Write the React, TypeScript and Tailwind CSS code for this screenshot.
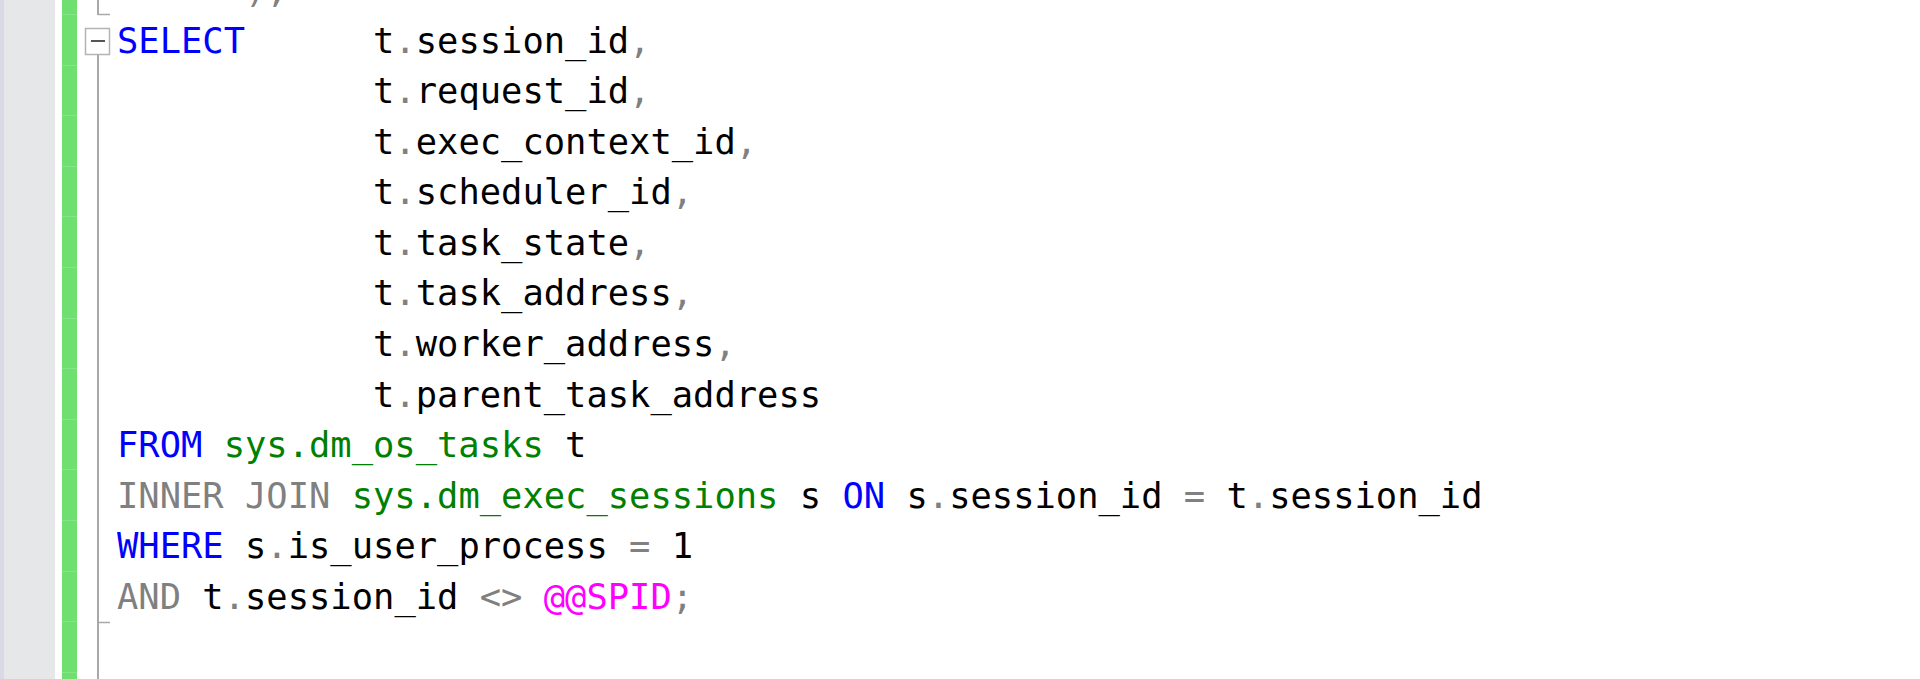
import React from "react";

type Tok = { t: string; c: "k" | "g" | "s" | "m" | "n" };

const cls: Record<Tok["c"], string> = {
  k: "text-[#0000ff]",
  g: "text-[#808080]",
  s: "text-[#008000]",
  m: "text-[#ff00ff]",
  n: "text-[#000000]",
};

const k = (t: string): Tok => ({ t, c: "k" });
const g = (t: string): Tok => ({ t, c: "g" });
const s = (t: string): Tok => ({ t, c: "s" });
const m = (t: string): Tok => ({ t, c: "m" });
const n = (t: string): Tok => ({ t, c: "n" });

const col = (name: string, comma: boolean, lead: Tok): Tok[] => {
  const r: Tok[] = [lead, n("t"), g("."), n(name)];
  if (comma) r.push(g(","));
  return r;
};

const pad = "            ";

const lines: Tok[][] = [
  [n("      "), g(");")],
  col("session_id", true, k("SELECT      ")),
  col("request_id", true, n(pad)),
  col("exec_context_id", true, n(pad)),
  col("scheduler_id", true, n(pad)),
  col("task_state", true, n(pad)),
  col("task_address", true, n(pad)),
  col("worker_address", true, n(pad)),
  col("parent_task_address", false, n(pad)),
  [k("FROM"), n(" "), s("sys.dm_os_tasks"), n(" t")],
  [
    g("INNER JOIN"),
    n(" "),
    s("sys.dm_exec_sessions"),
    n(" s "),
    k("ON"),
    n(" s"),
    g("."),
    n("session_id "),
    g("="),
    n(" t"),
    g("."),
    n("session_id"),
  ],
  [k("WHERE"), n(" s"), g("."), n("is_user_process "), g("="), n(" 1")],
  [g("AND"), n(" t"), g("."), n("session_id "), g("<>"), n(" "), m("@@SPID"), g(";")],
];

function FoldMargin() {
  return (
    <svg width="40" height="679" viewBox="0 0 40 679" className="block shrink-0">
      <line x1="21" y1="0" x2="21" y2="15" stroke="#a8a8a8" strokeWidth="2" />
      <line x1="21" y1="14.5" x2="33" y2="14.5" stroke="#a8a8a8" strokeWidth="1.5" />
      <rect x="8.5" y="28.5" width="24" height="26" fill="#ffffff" stroke="#b4b4b4" strokeWidth="1.5" />
      <line x1="14" y1="41" x2="28" y2="41" stroke="#555555" strokeWidth="2" />
      <line x1="21" y1="55" x2="21" y2="679" stroke="#a8a8a8" strokeWidth="2" />
      <line x1="21" y1="622.5" x2="33" y2="622.5" stroke="#a8a8a8" strokeWidth="1.5" />
    </svg>
  );
}

export default function App() {
  const segs = Array.from({ length: 15 });
  return (
    <div className="flex h-[679px] w-[1920px] overflow-hidden bg-white">
      <div className="w-[4px] shrink-0 bg-[#d9dae5]" />
      <div className="w-[51px] shrink-0 bg-[#e6e7e9]" />
      <div className="w-[7px] shrink-0 bg-white" />
      <div className="flex w-[15px] shrink-0 flex-col overflow-hidden bg-[#6fe06f]">
        <div className="mt-[-35.6px] flex flex-col">
          {segs.map((_, i) => (
            <div key={i} className="h-[50.6px] shrink-0 border-b border-[#84e584]" />
          ))}
        </div>
      </div>
      <FoldMargin />
      <div className="min-w-0 flex-1 overflow-hidden">
        <div
          className="mt-[-35.1px] whitespace-pre text-[35.45px] leading-[50.6px]"
          style={{ fontFamily: '"DejaVu Sans Mono", "Liberation Mono", monospace' }}
        >
          {lines.map((ln, i) => (
            <div key={i} className="h-[50.6px]">
              {ln.map((tk, j) => (
                <span key={j} className={cls[tk.c]}>
                  {tk.t}
                </span>
              ))}
            </div>
          ))}
        </div>
      </div>
    </div>
  );
}
